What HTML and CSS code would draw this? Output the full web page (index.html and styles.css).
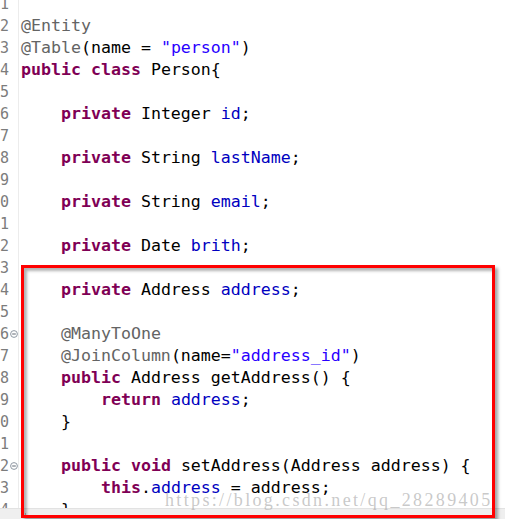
FILE: index.html
```html
<!DOCTYPE html>
<html>
<head>
<meta charset="utf-8">
<link rel="stylesheet" href="styles.css">
</head>
<body>
<div class="editor">
  <div class="viewport">
    <div class="gutter">
      <div class="gl"><span class="num">1</span><span class="fold"></span></div>
      <div class="gl"><span class="num">2</span><span class="fold"></span></div>
      <div class="gl"><span class="num">3</span><span class="fold"></span></div>
      <div class="gl"><span class="num">4</span><span class="fold"></span></div>
      <div class="gl"><span class="num">5</span><span class="fold"></span></div>
      <div class="gl"><span class="num">6</span><span class="fold"></span></div>
      <div class="gl"><span class="num">7</span><span class="fold"></span></div>
      <div class="gl"><span class="num">8</span><span class="fold"></span></div>
      <div class="gl"><span class="num">9</span><span class="fold"></span></div>
      <div class="gl"><span class="num">10</span><span class="fold"></span></div>
      <div class="gl"><span class="num">11</span><span class="fold"></span></div>
      <div class="gl"><span class="num">12</span><span class="fold"></span></div>
      <div class="gl"><span class="num">13</span><span class="fold"></span></div>
      <div class="gl"><span class="num">14</span><span class="fold"></span></div>
      <div class="gl"><span class="num">15</span><span class="fold"></span></div>
      <div class="gl"><span class="num">16</span><span class="fold"><svg width="8" height="8" viewBox="0 0 8 8"><circle cx="4" cy="4" r="3.4" fill="#fff" stroke="#8f98a3" stroke-width="1"/><line x1="2.2" y1="4" x2="5.8" y2="4" stroke="#5f6772" stroke-width="1"/></svg></span></div>
      <div class="gl"><span class="num">17</span><span class="fold"></span></div>
      <div class="gl"><span class="num">18</span><span class="fold"></span></div>
      <div class="gl"><span class="num">19</span><span class="fold"></span></div>
      <div class="gl"><span class="num">20</span><span class="fold"></span></div>
      <div class="gl"><span class="num">21</span><span class="fold"></span></div>
      <div class="gl"><span class="num">22</span><span class="fold"><svg width="8" height="8" viewBox="0 0 8 8"><circle cx="4" cy="4" r="3.4" fill="#fff" stroke="#8f98a3" stroke-width="1"/><line x1="2.2" y1="4" x2="5.8" y2="4" stroke="#5f6772" stroke-width="1"/></svg></span></div>
      <div class="gl"><span class="num">23</span><span class="fold"></span></div>
      <div class="gl"><span class="num">24</span><span class="fold"></span></div>
    </div>
    <div class="code">
      <div class="ln"> </div>
      <div class="ln"><span class="an">@Entity</span></div>
      <div class="ln"><span class="an">@Table</span>(name = <span class="st">"person"</span>)</div>
      <div class="ln"><span class="kw">public</span> <span class="kw">class</span> Person{</div>
      <div class="ln"> </div>
      <div class="ln">    <span class="kw">private</span> Integer <span class="fd">id</span>;</div>
      <div class="ln"> </div>
      <div class="ln">    <span class="kw">private</span> String <span class="fd">lastName</span>;</div>
      <div class="ln"> </div>
      <div class="ln">    <span class="kw">private</span> String <span class="fd">email</span>;</div>
      <div class="ln"> </div>
      <div class="ln">    <span class="kw">private</span> Date <span class="fd">brith</span>;</div>
      <div class="ln"> </div>
      <div class="ln">    <span class="kw">private</span> Address <span class="fd">address</span>;</div>
      <div class="ln"> </div>
      <div class="ln">    <span class="an">@ManyToOne</span></div>
      <div class="ln">    <span class="an">@JoinColumn</span>(name=<span class="st">"address_id"</span>)</div>
      <div class="ln">    <span class="kw">public</span> Address getAddress() {</div>
      <div class="ln">        <span class="kw">return</span> <span class="fd">address</span>;</div>
      <div class="ln">    }</div>
      <div class="ln"> </div>
      <div class="ln">    <span class="kw">public</span> <span class="kw">void</span> setAddress(Address address) {</div>
      <div class="ln">        <span class="kw">this</span>.<span class="fd">address</span> = address;</div>
      <div class="ln">    }</div>
    </div>
  </div>
  <div class="hscroll"><span class="grip"></span></div>
  <div class="highlight"></div>
  <div class="watermark">https://blog.csdn.net/qq_28289405</div>
</div>
</body>
</html>
```
FILE: styles.css
```css
html, body {
  margin: 0;
  padding: 0;
  background: #fff;
}

.editor {
  position: relative;
  width: 505px;
  height: 519px;
  overflow: hidden;
  background: #fff;
}

.viewport {
  display: flex;
  height: 508px;
  overflow: hidden;
}

.gutter {
  width: 18px;
  flex: none;
  border-right: 1px solid #ececec;
  overflow: hidden;
  margin-top: -7px;
}

.gl {
  display: flex;
  justify-content: flex-end;
  align-items: center;
  height: 22px;
}

.num {
  font-family: "DejaVu Sans Mono", monospace;
  font-size: 15px;
  color: #7c7c7c;
  white-space: nowrap;
}

.fold {
  width: 9px;
  flex: none;
  display: flex;
  align-items: center;
  justify-content: center;
}

.fold svg {
  display: block;
}

.code {
  flex: 1;
  margin-top: -7px;
  padding-left: 2px;
  font-family: "DejaVu Sans Mono", monospace;
  font-size: 16.6px;
  color: #000;
}

.ln {
  height: 22px;
  line-height: 22px;
  white-space: pre;
}

.kw {
  color: #7f0055;
  font-weight: bold;
}

.an {
  color: #646464;
}

.st {
  color: #2a00ff;
}

.fd {
  color: #0000c0;
}

.hscroll {
  height: 11px;
  background: #efefef;
  border-top: 1px solid #e2e2e2;
  position: relative;
}

.grip {
  position: absolute;
  left: 25px;
  top: 4px;
  width: 3px;
  height: 3px;
  border-left: 1px solid #b5b5b5;
  border-bottom: 1px solid #b5b5b5;
}

.highlight {
  position: absolute;
  left: 21px;
  top: 265px;
  width: 468px;
  height: 247px;
  border: 3px solid #ff0000;
  box-shadow: 3px 3px 3px rgba(0, 0, 0, 0.35), inset 3px 3px 3px rgba(0, 0, 0, 0.3);
}

.watermark {
  position: absolute;
  left: 165px;
  top: 490px;
  font-family: "Liberation Serif", serif;
  font-size: 18px;
  letter-spacing: 2.35px;
  color: rgba(165, 165, 165, 0.6);
  white-space: nowrap;
}
```
